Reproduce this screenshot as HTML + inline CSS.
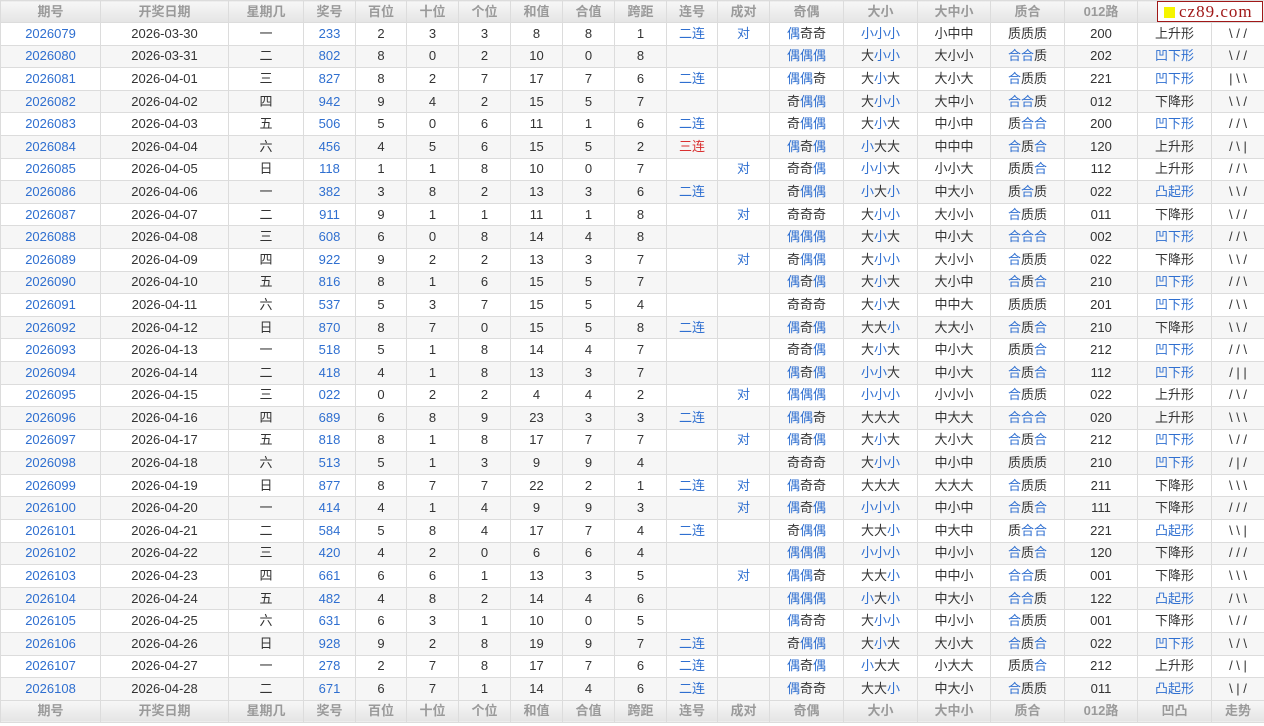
<!DOCTYPE html>
<html><head><meta charset="utf-8">
<style>
html,body{margin:0;padding:0;background:#fff;width:1264px;height:726px;overflow:hidden}
table{border-collapse:collapse;table-layout:fixed;width:1264px;font-family:"Liberation Sans","Noto Sans CJK SC",sans-serif;font-size:13px;color:#333}
td,th{border:1px solid #dcdcdc;text-align:center;padding:0;height:21.6px;line-height:20px;white-space:nowrap;overflow:hidden}
th{background:linear-gradient(#f7f7f7,#e4e4e4);color:#9a9a9a;font-weight:bold;height:21px;font-size:13px}
tbody tr:nth-child(even) td{background:#f6f6f6}
td:first-child,td:nth-child(4){color:#2f6fd0}
.b{color:#2f6fd0}.r{color:#d93030}
#logo{position:absolute;left:1157px;top:1px;width:104px;height:19px;background:#fff;border:1px solid #a01818;font-family:"Liberation Serif",serif;font-size:17px;color:#a01818;line-height:19px;letter-spacing:1px}
#logo span{display:inline-block;width:11px;height:11px;background:#f5f500;margin:0 4px 0 6px;vertical-align:-1px}
</style></head><body>
<table>
<colgroup><col style="width:100px"><col style="width:128px"><col style="width:75px"><col style="width:52px"><col style="width:51px"><col style="width:52px"><col style="width:52px"><col style="width:52px"><col style="width:52px"><col style="width:52px"><col style="width:51px"><col style="width:52px"><col style="width:74px"><col style="width:74px"><col style="width:73px"><col style="width:74px"><col style="width:73px"><col style="width:74px"><col style="width:53px"></colgroup>
<thead><tr><th>期号</th><th>开奖日期</th><th>星期几</th><th>奖号</th><th>百位</th><th>十位</th><th>个位</th><th>和值</th><th>合值</th><th>跨距</th><th>连号</th><th>成对</th><th>奇偶</th><th>大小</th><th>大中小</th><th>质合</th><th>012路</th><th>凹凸</th><th>走势</th></tr></thead>
<tbody id="tb">
<tr><td>2026079</td><td>2026-03-30</td><td>一</td><td>233</td><td>2</td><td>3</td><td>3</td><td>8</td><td>8</td><td>1</td><td>二连</td><td>对</td><td>偶奇奇</td><td>小小小</td><td>小中中</td><td>质质质</td><td>200</td><td>上升形</td><td>\ / /</td></tr>
<tr><td>2026080</td><td>2026-03-31</td><td>二</td><td>802</td><td>8</td><td>0</td><td>2</td><td>10</td><td>0</td><td>8</td><td></td><td></td><td>偶偶偶</td><td>大小小</td><td>大小小</td><td>合合质</td><td>202</td><td>凹下形</td><td>\ / /</td></tr>
<tr><td>2026081</td><td>2026-04-01</td><td>三</td><td>827</td><td>8</td><td>2</td><td>7</td><td>17</td><td>7</td><td>6</td><td>二连</td><td></td><td>偶偶奇</td><td>大小大</td><td>大小大</td><td>合质质</td><td>221</td><td>凹下形</td><td>| \ \</td></tr>
<tr><td>2026082</td><td>2026-04-02</td><td>四</td><td>942</td><td>9</td><td>4</td><td>2</td><td>15</td><td>5</td><td>7</td><td></td><td></td><td>奇偶偶</td><td>大小小</td><td>大中小</td><td>合合质</td><td>012</td><td>下降形</td><td>\ \ /</td></tr>
<tr><td>2026083</td><td>2026-04-03</td><td>五</td><td>506</td><td>5</td><td>0</td><td>6</td><td>11</td><td>1</td><td>6</td><td>二连</td><td></td><td>奇偶偶</td><td>大小大</td><td>中小中</td><td>质合合</td><td>200</td><td>凹下形</td><td>/ / \</td></tr>
<tr><td>2026084</td><td>2026-04-04</td><td>六</td><td>456</td><td>4</td><td>5</td><td>6</td><td>15</td><td>5</td><td>2</td><td class="r">三连</td><td></td><td>偶奇偶</td><td>小大大</td><td>中中中</td><td>合质合</td><td>120</td><td>上升形</td><td>/ \ |</td></tr>
<tr><td>2026085</td><td>2026-04-05</td><td>日</td><td>118</td><td>1</td><td>1</td><td>8</td><td>10</td><td>0</td><td>7</td><td></td><td>对</td><td>奇奇偶</td><td>小小大</td><td>小小大</td><td>质质合</td><td>112</td><td>上升形</td><td>/ / \</td></tr>
<tr><td>2026086</td><td>2026-04-06</td><td>一</td><td>382</td><td>3</td><td>8</td><td>2</td><td>13</td><td>3</td><td>6</td><td>二连</td><td></td><td>奇偶偶</td><td>小大小</td><td>中大小</td><td>质合质</td><td>022</td><td>凸起形</td><td>\ \ /</td></tr>
<tr><td>2026087</td><td>2026-04-07</td><td>二</td><td>911</td><td>9</td><td>1</td><td>1</td><td>11</td><td>1</td><td>8</td><td></td><td>对</td><td>奇奇奇</td><td>大小小</td><td>大小小</td><td>合质质</td><td>011</td><td>下降形</td><td>\ / /</td></tr>
<tr><td>2026088</td><td>2026-04-08</td><td>三</td><td>608</td><td>6</td><td>0</td><td>8</td><td>14</td><td>4</td><td>8</td><td></td><td></td><td>偶偶偶</td><td>大小大</td><td>中小大</td><td>合合合</td><td>002</td><td>凹下形</td><td>/ / \</td></tr>
<tr><td>2026089</td><td>2026-04-09</td><td>四</td><td>922</td><td>9</td><td>2</td><td>2</td><td>13</td><td>3</td><td>7</td><td></td><td>对</td><td>奇偶偶</td><td>大小小</td><td>大小小</td><td>合质质</td><td>022</td><td>下降形</td><td>\ \ /</td></tr>
<tr><td>2026090</td><td>2026-04-10</td><td>五</td><td>816</td><td>8</td><td>1</td><td>6</td><td>15</td><td>5</td><td>7</td><td></td><td></td><td>偶奇偶</td><td>大小大</td><td>大小中</td><td>合质合</td><td>210</td><td>凹下形</td><td>/ / \</td></tr>
<tr><td>2026091</td><td>2026-04-11</td><td>六</td><td>537</td><td>5</td><td>3</td><td>7</td><td>15</td><td>5</td><td>4</td><td></td><td></td><td>奇奇奇</td><td>大小大</td><td>中中大</td><td>质质质</td><td>201</td><td>凹下形</td><td>/ \ \</td></tr>
<tr><td>2026092</td><td>2026-04-12</td><td>日</td><td>870</td><td>8</td><td>7</td><td>0</td><td>15</td><td>5</td><td>8</td><td>二连</td><td></td><td>偶奇偶</td><td>大大小</td><td>大大小</td><td>合质合</td><td>210</td><td>下降形</td><td>\ \ /</td></tr>
<tr><td>2026093</td><td>2026-04-13</td><td>一</td><td>518</td><td>5</td><td>1</td><td>8</td><td>14</td><td>4</td><td>7</td><td></td><td></td><td>奇奇偶</td><td>大小大</td><td>中小大</td><td>质质合</td><td>212</td><td>凹下形</td><td>/ / \</td></tr>
<tr><td>2026094</td><td>2026-04-14</td><td>二</td><td>418</td><td>4</td><td>1</td><td>8</td><td>13</td><td>3</td><td>7</td><td></td><td></td><td>偶奇偶</td><td>小小大</td><td>中小大</td><td>合质合</td><td>112</td><td>凹下形</td><td>/ | |</td></tr>
<tr><td>2026095</td><td>2026-04-15</td><td>三</td><td>022</td><td>0</td><td>2</td><td>2</td><td>4</td><td>4</td><td>2</td><td></td><td>对</td><td>偶偶偶</td><td>小小小</td><td>小小小</td><td>合质质</td><td>022</td><td>上升形</td><td>/ \ /</td></tr>
<tr><td>2026096</td><td>2026-04-16</td><td>四</td><td>689</td><td>6</td><td>8</td><td>9</td><td>23</td><td>3</td><td>3</td><td>二连</td><td></td><td>偶偶奇</td><td>大大大</td><td>中大大</td><td>合合合</td><td>020</td><td>上升形</td><td>\ \ \</td></tr>
<tr><td>2026097</td><td>2026-04-17</td><td>五</td><td>818</td><td>8</td><td>1</td><td>8</td><td>17</td><td>7</td><td>7</td><td></td><td>对</td><td>偶奇偶</td><td>大小大</td><td>大小大</td><td>合质合</td><td>212</td><td>凹下形</td><td>\ / /</td></tr>
<tr><td>2026098</td><td>2026-04-18</td><td>六</td><td>513</td><td>5</td><td>1</td><td>3</td><td>9</td><td>9</td><td>4</td><td></td><td></td><td>奇奇奇</td><td>大小小</td><td>中小中</td><td>质质质</td><td>210</td><td>凹下形</td><td>/ | /</td></tr>
<tr><td>2026099</td><td>2026-04-19</td><td>日</td><td>877</td><td>8</td><td>7</td><td>7</td><td>22</td><td>2</td><td>1</td><td>二连</td><td>对</td><td>偶奇奇</td><td>大大大</td><td>大大大</td><td>合质质</td><td>211</td><td>下降形</td><td>\ \ \</td></tr>
<tr><td>2026100</td><td>2026-04-20</td><td>一</td><td>414</td><td>4</td><td>1</td><td>4</td><td>9</td><td>9</td><td>3</td><td></td><td>对</td><td>偶奇偶</td><td>小小小</td><td>中小中</td><td>合质合</td><td>111</td><td>下降形</td><td>/ / /</td></tr>
<tr><td>2026101</td><td>2026-04-21</td><td>二</td><td>584</td><td>5</td><td>8</td><td>4</td><td>17</td><td>7</td><td>4</td><td>二连</td><td></td><td>奇偶偶</td><td>大大小</td><td>中大中</td><td>质合合</td><td>221</td><td>凸起形</td><td>\ \ |</td></tr>
<tr><td>2026102</td><td>2026-04-22</td><td>三</td><td>420</td><td>4</td><td>2</td><td>0</td><td>6</td><td>6</td><td>4</td><td></td><td></td><td>偶偶偶</td><td>小小小</td><td>中小小</td><td>合质合</td><td>120</td><td>下降形</td><td>/ / /</td></tr>
<tr><td>2026103</td><td>2026-04-23</td><td>四</td><td>661</td><td>6</td><td>6</td><td>1</td><td>13</td><td>3</td><td>5</td><td></td><td>对</td><td>偶偶奇</td><td>大大小</td><td>中中小</td><td>合合质</td><td>001</td><td>下降形</td><td>\ \ \</td></tr>
<tr><td>2026104</td><td>2026-04-24</td><td>五</td><td>482</td><td>4</td><td>8</td><td>2</td><td>14</td><td>4</td><td>6</td><td></td><td></td><td>偶偶偶</td><td>小大小</td><td>中大小</td><td>合合质</td><td>122</td><td>凸起形</td><td>/ \ \</td></tr>
<tr><td>2026105</td><td>2026-04-25</td><td>六</td><td>631</td><td>6</td><td>3</td><td>1</td><td>10</td><td>0</td><td>5</td><td></td><td></td><td>偶奇奇</td><td>大小小</td><td>中小小</td><td>合质质</td><td>001</td><td>下降形</td><td>\ / /</td></tr>
<tr><td>2026106</td><td>2026-04-26</td><td>日</td><td>928</td><td>9</td><td>2</td><td>8</td><td>19</td><td>9</td><td>7</td><td>二连</td><td></td><td>奇偶偶</td><td>大小大</td><td>大小大</td><td>合质合</td><td>022</td><td>凹下形</td><td>\ / \</td></tr>
<tr><td>2026107</td><td>2026-04-27</td><td>一</td><td>278</td><td>2</td><td>7</td><td>8</td><td>17</td><td>7</td><td>6</td><td>二连</td><td></td><td>偶奇偶</td><td>小大大</td><td>小大大</td><td>质质合</td><td>212</td><td>上升形</td><td>/ \ |</td></tr>
<tr><td>2026108</td><td>2026-04-28</td><td>二</td><td>671</td><td>6</td><td>7</td><td>1</td><td>14</td><td>4</td><td>6</td><td>二连</td><td></td><td>偶奇奇</td><td>大大小</td><td>中大小</td><td>合质质</td><td>011</td><td>凸起形</td><td>\ | /</td></tr>
</tbody>
<tfoot><tr><th>期号</th><th>开奖日期</th><th>星期几</th><th>奖号</th><th>百位</th><th>十位</th><th>个位</th><th>和值</th><th>合值</th><th>跨距</th><th>连号</th><th>成对</th><th>奇偶</th><th>大小</th><th>大中小</th><th>质合</th><th>012路</th><th>凹凸</th><th>走势</th></tr></tfoot>
</table>
<div id="logo"><span></span>cz89.com</div>
<script>
var rows=document.getElementById('tb').rows;
function col(c,ch){var h='';for(var i=0;i<c.textContent.length;i++){var x=c.textContent[i];h+=(x==ch)?'<span class="b">'+x+'</span>':x;}c.innerHTML=h;}
for(var i=0;i<rows.length;i++){var r=rows[i].cells;
if(r[10].textContent=='二连')r[10].className='b';
r[11].className='b';
col(r[12],'偶');col(r[13],'小');col(r[15],'合');
if(r[17].textContent.indexOf('凹')>=0||r[17].textContent.indexOf('凸')>=0)r[17].className='b';}
</script>
</body></html>
